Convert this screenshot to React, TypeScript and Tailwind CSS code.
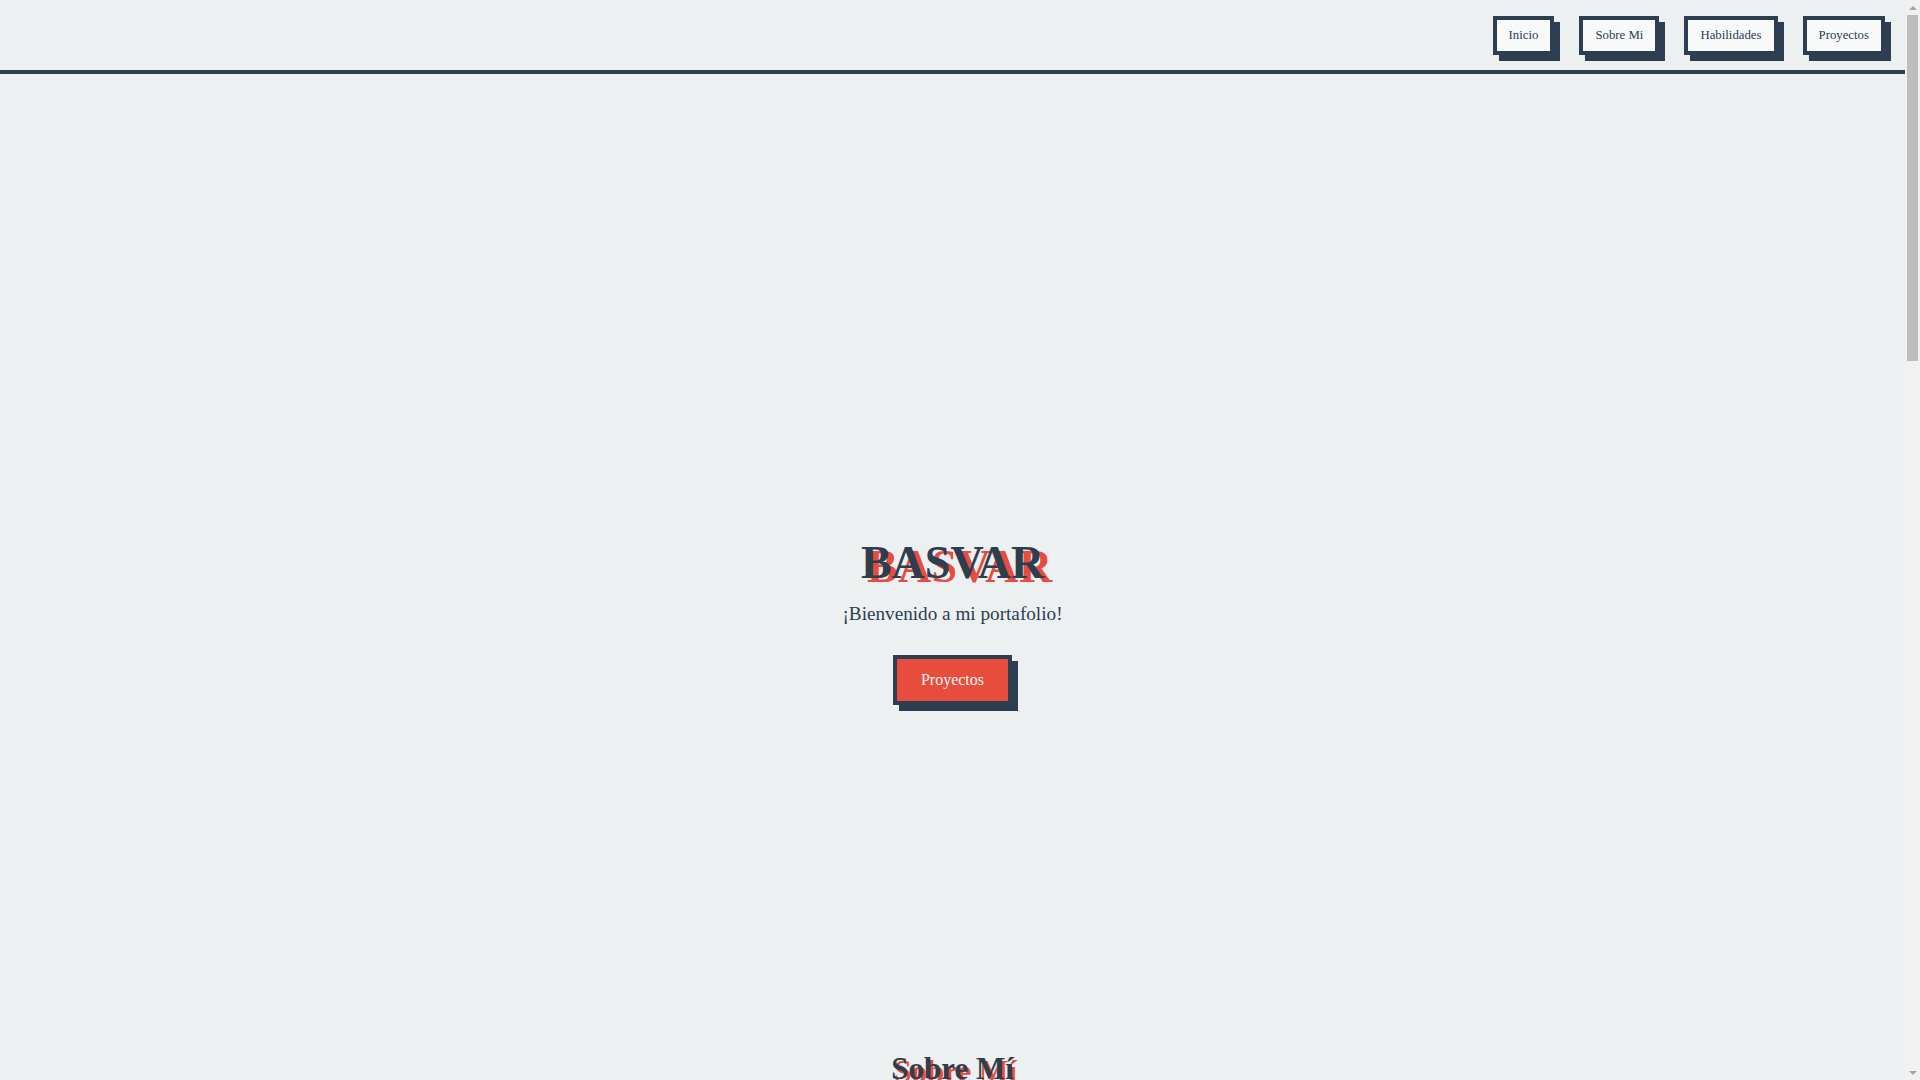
import React from "react";

const navItems = ["Inicio", "Sobre Mi", "Habilidades", "Proyectos"];

const skills = ["HTML", "CSS", "JavaScript", "React", "Node.js", "Git"];
const projects = [
  { t: "Proyecto 1", d: "Descripción breve del proyecto." },
  { t: "Proyecto 2", d: "Descripción breve del proyecto." },
  { t: "Proyecto 3", d: "Descripción breve del proyecto." },
];

function ShadowTitle({ text, redClass }: { text: string; redClass: string }) {
  return (
    <span className="relative inline-block whitespace-nowrap">
      <span aria-hidden className={"absolute text-[#e74c3c] whitespace-nowrap " + redClass}>
        {text}
      </span>
      <span className="relative text-[#2c3e50]">{text}</span>
    </span>
  );
}

function FakeScrollbar() {
  return (
    <div className="fixed right-0 top-0 h-screen w-[15px] bg-[#f1f1f1] flex flex-col items-center">
      <div className="h-[15px] w-full flex items-center justify-center">
        <div className="w-0 h-0 border-l-[4px] border-r-[4px] border-b-[4px] border-l-transparent border-r-transparent border-b-[#a3a3a3]" />
      </div>
      <div className="w-[11px] h-[346px] bg-[#bdbdbd]" />
      <div className="flex-1" />
      <div className="h-[15px] w-full flex items-center justify-center">
        <div className="w-0 h-0 border-l-[4px] border-r-[4px] border-t-[4px] border-l-transparent border-r-transparent border-t-[#a3a3a3]" />
      </div>
    </div>
  );
}

export default function App() {
  return (
    <div className="min-h-screen bg-[#ecf0f1] text-[#2c3e50] font-['Liberation_Serif',serif]">
      <div className="mr-[15px]">
        <header className="h-[74px] border-b-4 border-[#2c3e50] flex items-center justify-end pr-[20px]">
          <nav className="flex items-center gap-[25px]">
            {navItems.map((n) => (
              <a
                key={n}
                href="#"
                className="block border-4 border-[#2c3e50] bg-[#f8f9f9] px-[12px] py-[8px] text-[12.8px] leading-[15px] text-[#2c3e50] shadow-[6px_6px_0_#2c3e50]"
              >
                {n}
              </a>
            ))}
          </nav>
        </header>

        <section className="flex flex-col items-center pt-[466px] pb-[200px]">
          <h1 className="m-0 text-[46px] leading-[45px] font-bold">
            <ShadowTitle text="BASVAR" redClass="left-[6px] top-[4px] tracking-[0.4px]" />
          </h1>
          <p className="mt-[19px] text-[19.2px] leading-[19.2px]">¡Bienvenido a mi portafolio!</p>
          <a
            href="#"
            className="mt-[32px] block border-4 border-[#2c3e50] bg-[#e74c3c] px-[24px] py-[12px] text-[16px] leading-[18px] text-[#f4f6f6] shadow-[6px_6px_0_#2c3e50]"
          >
            Proyectos
          </a>
        </section>

        <section className="flex flex-col items-center pt-[148px] pb-[120px] px-[20px]">
          <h2 className="m-0 text-[31px] leading-[32px] font-bold">
            <ShadowTitle text="Sobre Mí" redClass="left-[3px] top-[3px]" />
          </h2>
          <div className="mt-[40px] max-w-[800px] border-4 border-[#2c3e50] bg-[#f8f9f9] p-[32px] shadow-[6px_6px_0_#2c3e50] text-[18px] leading-[28px]">
            Soy un desarrollador apasionado por crear experiencias web sencillas, claras y
            funcionales. Me gusta aprender nuevas tecnologías y convertir ideas en proyectos reales.
          </div>
        </section>

        <section className="flex flex-col items-center py-[120px] px-[20px]">
          <h2 className="m-0 text-[31px] leading-[32px] font-bold">
            <ShadowTitle text="Habilidades" redClass="left-[3px] top-[3px]" />
          </h2>
          <div className="mt-[48px] grid grid-cols-3 gap-[32px]">
            {skills.map((s) => (
              <div
                key={s}
                className="w-[220px] border-4 border-[#2c3e50] bg-[#f8f9f9] py-[24px] text-center text-[18px] shadow-[6px_6px_0_#2c3e50]"
              >
                {s}
              </div>
            ))}
          </div>
        </section>

        <section className="flex flex-col items-center py-[120px] px-[20px]">
          <h2 className="m-0 text-[31px] leading-[32px] font-bold">
            <ShadowTitle text="Proyectos" redClass="left-[3px] top-[3px]" />
          </h2>
          <div className="mt-[48px] grid grid-cols-3 gap-[32px]">
            {projects.map((p) => (
              <div
                key={p.t}
                className="w-[300px] h-[260px] border-4 border-[#2c3e50] bg-[#f8f9f9] p-[24px] shadow-[6px_6px_0_#2c3e50]"
              >
                <h3 className="text-[22px] font-bold">{p.t}</h3>
                <p className="mt-[12px] text-[16px]">{p.d}</p>
              </div>
            ))}
          </div>
        </section>

        <footer className="border-t-4 border-[#2c3e50] py-[24px] text-center text-[14px]">
          © 2024 BASVAR
        </footer>
      </div>
      <FakeScrollbar />
    </div>
  );
}
